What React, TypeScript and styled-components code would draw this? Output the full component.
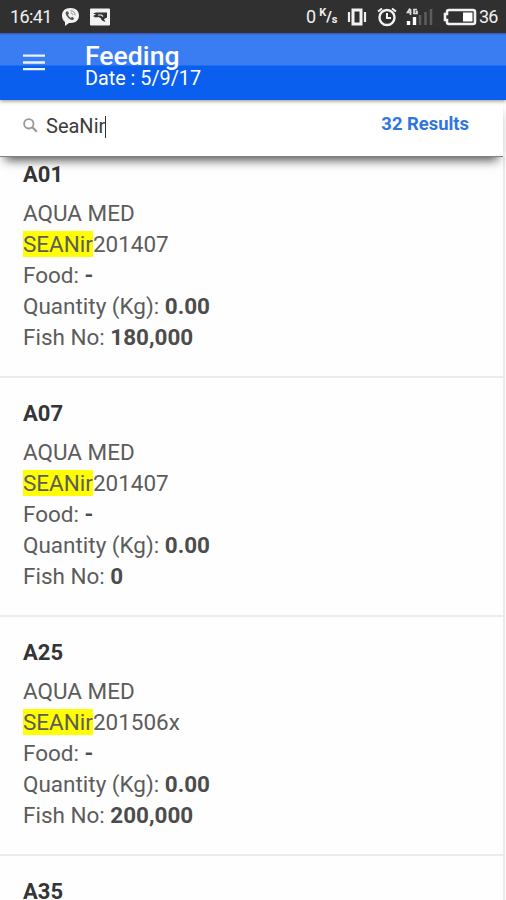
import React from "react";
import styled, { createGlobalStyle } from "styled-components";

const GlobalStyle = createGlobalStyle`
  * { box-sizing: border-box; }
  body {
    margin: 0;
    background: #fff;
    font-family: Roboto, "Liberation Sans", sans-serif;
  }
`;

const Screen = styled.div`
  width: 506px;
  height: 900px;
  overflow: hidden;
  display: flex;
  flex-direction: column;
  background: #fefefe;
`;

const StatusBar = styled.div`
  height: 33px;
  flex: none;
  display: flex;
  justify-content: space-between;
  padding: 0 8px 0 10px;
  background: #303030;
  color: #f0f0f0;
  font-size: 18px;
  line-height: 33px;
`;

const StatusGroup = styled.div`
  display: flex;
  align-items: center;
`;

const Clock = styled.span`
  width: 51px;
  letter-spacing: -0.6px;
`;

const Battery = styled.span`
  width: 19px;
  letter-spacing: -0.8px;
`;

const Speed = styled.span`
  width: 41px;
  display: flex;
  align-items: center;
  gap: 3px;
`;

const Rate = styled.span`
  display: flex;
  font-weight: 700;
  line-height: 12px;
`;

const RatePart = styled.span<{ $shift: number; $size?: number }>`
  font-size: ${(p) => p.$size ?? 11}px;
  transform: translateY(${(p) => p.$shift}px);
`;

const Glyph = styled.svg<{ $gap: number }>`
  display: block;
  flex: none;
  margin-right: ${(p) => p.$gap}px;
`;

const AppBar = styled.header`
  position: relative;
  z-index: 3;
  flex: none;
  height: 67px;
  display: flex;
  padding-left: 23px;
  color: #fff;
  background: linear-gradient(#3b5cc0 0 1px, #3a7df3 2px 32px, #0a5fee 33px);
  box-shadow: 0 1px 4px rgba(70, 60, 50, 0.6);
`;

const MenuButton = styled.button`
  width: 62px;
  border: 0;
  background: none;
  display: flex;
  align-items: flex-start;
  padding: 21px 0 0;
`;

const Titles = styled.div`
  padding-top: 10px;
`;

const Title = styled.h1`
  margin: 0;
  font-size: 26.6px;
  font-weight: 500;
  line-height: 26px;
`;

const Subtitle = styled.div`
  font-size: 19.8px;
  line-height: 20px;
`;

const SearchBar = styled.div`
  position: relative;
  z-index: 2;
  flex: none;
  width: 503px;
  height: 57px;
  display: flex;
  align-items: flex-start;
  padding: 12px 34px 0 22px;
  background: #fff;
  border-bottom: 1px solid #808080;
  box-shadow: 0 8px 10px -5px rgba(0, 0, 0, 0.7);
`;

const Query = styled.div`
  flex: 1;
  display: flex;
  align-items: center;
  font-size: 20px;
  line-height: 28px;
  color: #3c3c3c;
`;

const Caret = styled.span`
  width: 1px;
  height: 22px;
  margin-top: 2px;
  background: #333;
`;

const Count = styled.div`
  font-size: 18.4px;
  font-weight: 700;
  line-height: 23px;
  color: #2f76dc;
`;

const List = styled.main`
  flex: 1;
  width: 505px;
  overflow: hidden;
  border-right: 2px solid #ebebeb;
`;

const Entry = styled.article<{ $first?: boolean }>`
  height: ${(p) => (p.$first ? 221 : 239)}px;
  padding: ${(p) => (p.$first ? 5 : 23)}px 23px 0;
  border-bottom: 2px solid #ececec;
  color: #5c5c5c;
  font-size: 22.48px;
  line-height: 31px;
`;

const Code = styled.h2`
  margin: 0 0 10px;
  font-size: 22px;
  font-weight: 700;
  line-height: 26px;
  color: #353535;
`;

const Line = styled.div`
  white-space: nowrap;
`;

const Value = styled.b`
  font-weight: 700;
  color: #4c4c4c;
`;

const Match = styled.mark`
  background: #ff0;
  color: inherit;
`;

const entries = [
  { code: "A01", batch: "201407", fish: "180,000" },
  { code: "A07", batch: "201407", fish: "0" },
  { code: "A25", batch: "201506x", fish: "200,000" },
];

function StatusIcons() {
  return (
    <StatusBar>
      <StatusGroup>
        <Clock>16:41</Clock>
        <Glyph $gap={10} width="19" height="20" viewBox="0 0 19 20">
          <path d="M9.500 1C4 1 1 4 1 8.500c0 3 1 5 3 6.500v4l4-3h1.500c5.500 0 8.500-3 8.500-7.500S15 1 9.500 1Z" fill="#f2f2f2" />
          <path d="M5.500 4.500c-1.500 1-1 3 1 5.500s4.500 4 6 2.500c1-1 .5-1.500-1.500-2.700L9.800 11C8.500 10.200 7.500 9 7 7.600l1-1C7.200 4.500 6.500 3.800 5.500 4.500Z" fill="#555" />
          <path d="M9.500 3.800c3 0 4.500 1.700 4.500 4.400M9.600 6c1.500.1 2.200.8 2.300 2.200" fill="none" stroke="#888" strokeWidth="1" />
        </Glyph>
        <Glyph $gap={0} width="20" height="18" viewBox="0 0 20 18">
          <rect width="20" height="17" rx="1" y=".5" fill="#f2f2f2" />
          <path d="M3 5.500 6 4.500h11v5l-3 1.500 1.500 3-3.500-1.500-1.500-2.500-2-1-3 .5-2.500-1.500 3-1.500Z" fill="#333" />
          <path d="M8 7h3.500l1.500 1.500" stroke="#eee" fill="none" strokeWidth="1.200" />
        </Glyph>
      </StatusGroup>
      <StatusGroup>
        <Speed>
          0
          <Rate>
            <RatePart $shift={-4}>K</RatePart>
            <RatePart $shift={0} $size={15}>/</RatePart>
            <RatePart $shift={3}>s</RatePart>
          </Rate>
        </Speed>
        <Glyph $gap={10} width="20" height="18" viewBox="0 0 20 18">
          <rect x="6" y="2" width="8" height="14" fill="none" stroke="#f2f2f2" strokeWidth="3" />
          <path d="M2 4v10M18 4v10" stroke="#eee" strokeWidth="2.200" />
        </Glyph>
        <Glyph $gap={9} width="20" height="20" viewBox="0 0 20 20">
          <circle cx="10" cy="10.500" r="7.500" fill="none" stroke="#f2f2f2" strokeWidth="2.400" />
          <path d="M10 6v5h4M1 4.500l4-3M19 4.500l-4-3" fill="none" stroke="#f2f2f2" strokeWidth="2" />
        </Glyph>
        <Glyph $gap={10} width="27" height="18" viewBox="0 0 27 18">
          <path d="M4 0.500 1.500 4.500h4M4.500 1v6M11 1.500H8v4h3v-2H9.500" fill="none" stroke="#ddd" strokeWidth="1.700" />
          <path d="M2.500 13v4M8.500 9v8" stroke="#fff" strokeWidth="3.400" />
          <path d="M14 7v10M19.500 4v13M25 1v16" stroke="#5d5d5d" strokeWidth="2.600" />
        </Glyph>
        <Glyph $gap={2} width="34" height="18" viewBox="0 0 34 18">
          <path d="M6 2h24q2 0 2 2v10q0 2-2 2H6q-2 0-2-2v-2H2V6h2V4q0-2 2-2Z" fill="none" stroke="#f2f2f2" strokeWidth="2.600" />
          <rect x="20" y="4.500" width="9.500" height="9" fill="#fff" />
        </Glyph>
        <Battery>36</Battery>
      </StatusGroup>
    </StatusBar>
  );
}

export default function App() {
  return (
    <>
      <GlobalStyle />
      <Screen>
        <StatusIcons />
        <AppBar>
          <MenuButton aria-label="Menu">
            <svg width="22" height="17" viewBox="0 0 22 17">
              <path d="M0 1.700h22M0 8.500h22M0 15.200h22" stroke="#eaf3ff" strokeWidth="2.300" />
            </svg>
          </MenuButton>
          <Titles>
            <Title>Feeding</Title>
            <Subtitle>Date : 5/9/17</Subtitle>
          </Titles>
        </AppBar>
        <SearchBar>
          <Query>
            <Glyph $gap={8} width="16" height="16" viewBox="0 0 16 16">
              <circle cx="6.800" cy="5.800" r="4.700" fill="none" stroke="#999" strokeWidth="1.800" />
              <path d="m10.300 9.300 4.500 4.500" stroke="#999" strokeWidth="2.200" />
            </Glyph>
            SeaNir
            <Caret />
          </Query>
          <Count>32 Results</Count>
        </SearchBar>
        <List>
          {entries.map((entry, index) => (
            <Entry key={entry.code} $first={index === 0}>
              <Code>{entry.code}</Code>
              <Line>AQUA MED</Line>
              <Line>
                <Match>SEANir</Match>
                {entry.batch}
              </Line>
              <Line>
                Food: <Value>-</Value>
              </Line>
              <Line>
                Quantity (Kg): <Value>0.00</Value>
              </Line>
              <Line>
                Fish No: <Value>{entry.fish}</Value>
              </Line>
            </Entry>
          ))}
          <Entry>
            <Code>A35</Code>
          </Entry>
        </List>
      </Screen>
    </>
  );
}
